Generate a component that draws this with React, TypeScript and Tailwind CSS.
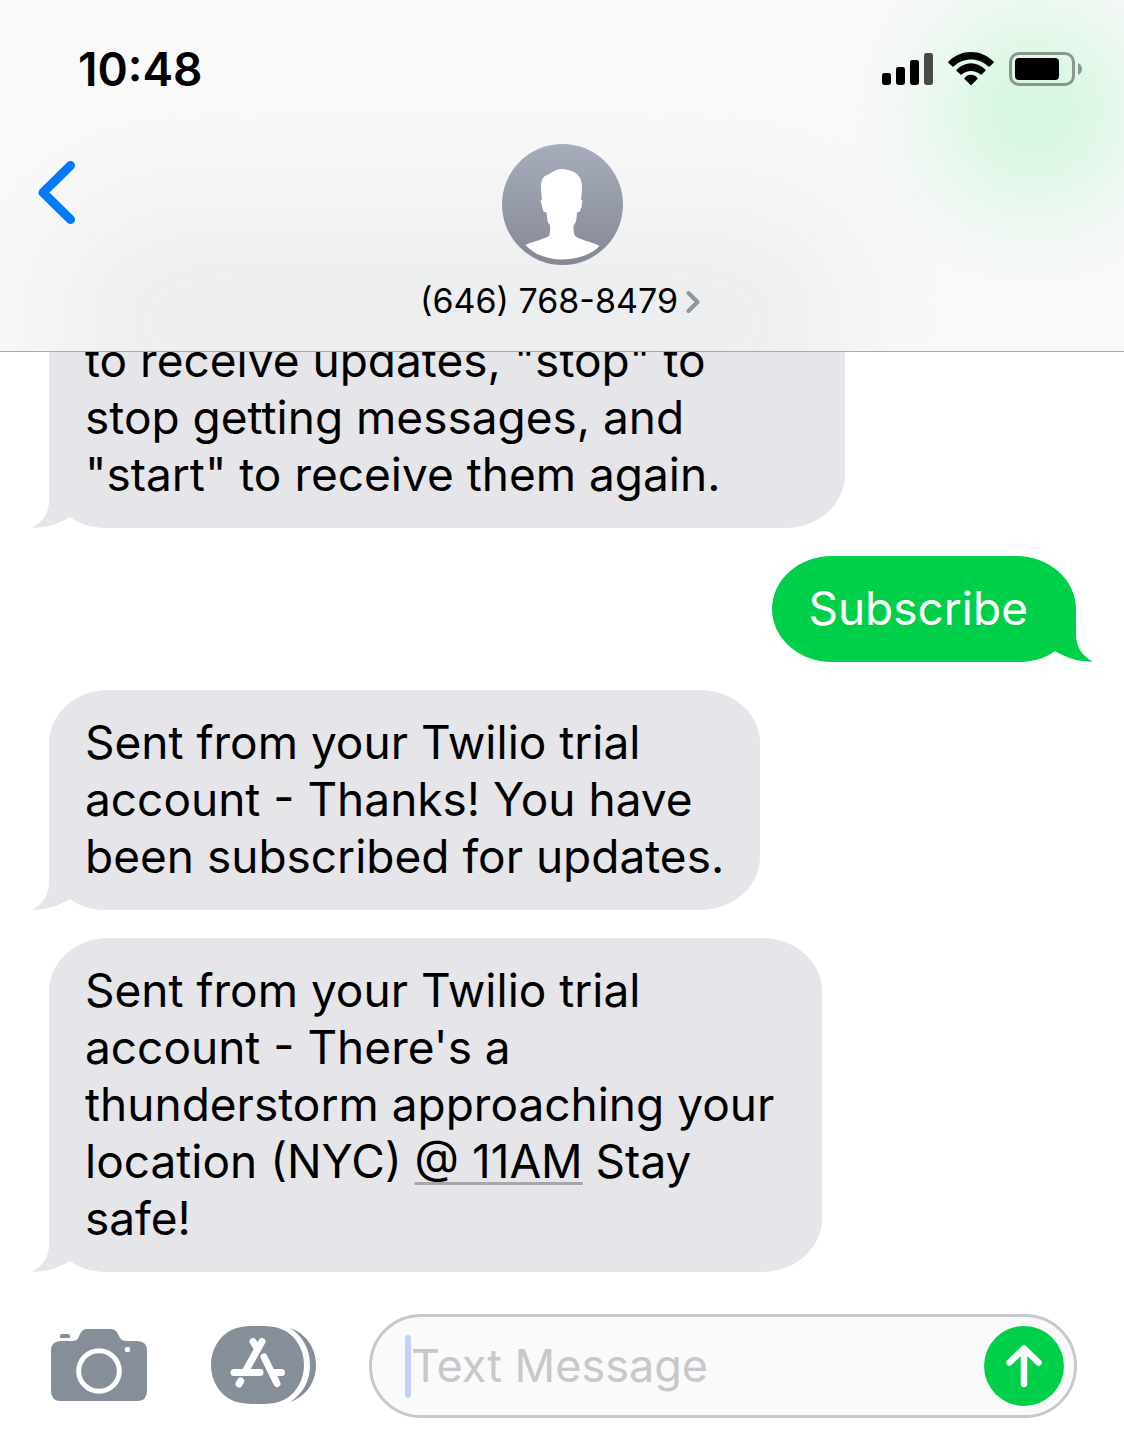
import type { ReactNode } from "react";

function Bubble({ side, className = "", children }: { side: "in" | "out"; className?: string; children: ReactNode }) {
  const incoming = side === "in";
  return (
    <div
      className={`relative max-w-full shrink-0 whitespace-nowrap rounded-[60px/53px] pt-6 pb-[25px] text-[46px] leading-[57px] ${
        incoming ? "self-start bg-[#e5e5ea] px-9 text-black" : "self-end bg-[#00cf49] pr-12 pl-9 text-white"
      } ${className}`}
    >
      <svg
        viewBox="0 0 77 54"
        aria-hidden="true"
        className={`absolute bottom-0 h-[54px] w-[77px] ${
          incoming ? "-left-[17px] text-[#e5e5ea]" : "-right-[17px] -scale-x-100 text-[#00cf49]"
        }`}
      >
        <path fill="currentColor" d="M17 0V26C17 39 11 48 0 53.7C15 53.7 26 50 38 43C48 50 58 54 77 54V0Z" />
      </svg>
      <p className="relative">{children}</p>
    </div>
  );
}

function StatusIcons() {
  return (
    <div className="flex items-center" role="img" aria-label="Signal, Wi-Fi and battery">
      <svg viewBox="0 0 51 32" className="h-8 w-[51px]" aria-hidden="true">
        <rect x="0" y="20" width="9" height="12" rx="2.4" />
        <rect x="14" y="14" width="9" height="18" rx="2.4" />
        <rect x="28" y="7" width="9" height="25" rx="2.4" />
        <rect x="42" y="0" width="9" height="32" rx="2.4" fill="#484a49" />
      </svg>
      <svg viewBox="0 0 46 34" className="ml-[15px] h-[34px] w-[46px]" aria-hidden="true">
        <path d="M0.3 9.8C13-3.2 33-3.2 45.7 9.8Q46 10.3 45.6 10.8L41.6 14.6Q41 15 40.5 14.6C30.5 5.2 15.5 5.2 5.5 14.6Q5 15 4.4 14.6L0.4 10.8Q0 10.3 0.3 9.8Z" />
        <path d="M8.5 17.8C16.5 9 29.5 9 37.5 17.8Q37.9 18.3 37.5 18.8L33.5 22.6Q33 23 32.5 22.6C27 17.7 19 17.7 13.5 22.6Q13 23 12.5 22.6L8.5 18.8Q8.1 18.3 8.5 17.8Z" />
        <path d="M16.5 25.9C20 21.7 26 21.7 29.5 25.9Q29.9 26.4 29.5 26.9L23.6 32.7Q23 33.2 22.4 32.7L16.5 26.9Q16.1 26.4 16.5 25.9Z" />
      </svg>
      <svg viewBox="0 0 74 34" className="ml-[15px] h-[34px] w-[74px]" aria-hidden="true">
        <rect x="1.5" y="1.5" width="63" height="31" rx="8.5" fill="none" stroke="#8a978f" strokeWidth="3" />
        <rect x="6" y="6" width="44" height="22" rx="4" />
        <path d="M69 11Q73 13 73 17T69 23Z" fill="#8a978f" />
      </svg>
    </div>
  );
}

function Avatar() {
  return (
    <svg viewBox="0 0 121 121" className="h-[121px] w-[121px]" aria-hidden="true">
      <defs>
        <linearGradient id="avatar-fill" x1="0" y1="0" x2="0" y2="1">
          <stop offset="0" stopColor="#a6adbc" />
          <stop offset="1" stopColor="#858893" />
        </linearGradient>
      </defs>
      <circle cx="60.5" cy="60.5" r="60.5" fill="url(#avatar-fill)" />
      <path
        fill="#fff"
        d="M60 25C65 25 69 27 73 28.5C78 32 80 37 80 43C80 48 79.5 51 79 55.5Q81 55.5 80 59C80 62 79 64 78.5 66.5Q78 68.5 75 68.5C74.5 73 75 78 71.5 81.5C71.5 86 71.5 88 73 92C77 96 89 97 97.5 102C90 110 76 115.5 60.5 115.5C45 115.5 31 110 23.5 101C32 97 43 95 47 92C48.5 88 48 85 48 81C44.5 78 45.5 73 44.5 68.5Q41.5 68.5 41 66.5C40.5 63 39.5 61 39 58Q38 55.5 40 55.5C39.5 51 39 47 39 43C39 36 41 32 45.5 31C50 28 55 25 60 25Z"
      />
    </svg>
  );
}

function Header() {
  return (
    <header className="relative flex h-[352px] shrink-0 flex-col overflow-hidden border-b border-[#a9abab] bg-[#f9f9f9]">
      <div className="absolute top-[210px] right-[280px] -bottom-20 left-[60px] rounded-[80px] bg-[#ecedee] blur-[60px]" />
      <div className="absolute top-[10px] -right-[10px] h-[200px] w-[200px] rounded-full bg-[#d3f7df] blur-[50px]" />
      <div className="relative flex items-center justify-between pt-10 pr-[41px] pl-[78px]">
        <time className="text-[46px] leading-[58px] font-semibold">10:48</time>
        <StatusIcons />
      </div>
      <div className="relative grid flex-1 grid-cols-[1fr_auto_1fr] items-start pt-[46px]">
        <button type="button" aria-label="Back" className="mt-4 ml-9 w-11">
          <svg viewBox="0 0 44 66" className="h-[66px] w-11" fill="none" aria-hidden="true">
            <path d="M34.5 5.5L7 32.5L34.5 59.5" stroke="#007aff" strokeWidth="9" strokeLinecap="round" strokeLinejoin="round" />
          </svg>
        </button>
        <button type="button" className="flex flex-col items-center">
          <Avatar />
          <span className="mt-4 flex items-center gap-2 pr-1 text-[34px] leading-10">
            (646) 768-8479
            <svg viewBox="0 0 14 24" className="h-6 w-[14px]" fill="none" aria-hidden="true">
              <path d="M2.5 4L11.5 13L2.5 22" stroke="#8e959f" strokeWidth="4" strokeLinecap="round" strokeLinejoin="round" />
            </svg>
          </span>
        </button>
      </div>
    </header>
  );
}

function Composer() {
  return (
    <form className="flex shrink-0 items-center pt-[42px] pr-[47px] pb-3 pl-[51px]" onSubmit={(e) => e.preventDefault()}>
      <button type="button" aria-label="Camera" className="shrink-0 pb-0.5">
        <svg viewBox="0 0 96 72" className="block h-[72px] w-24" fill="#868e99" aria-hidden="true">
          <path d="M9 9V7Q9 5 11 5H17Q19 5 19 7V9Z" />
          <path d="M10 12H21C27 12 27 9 29 5C31 1 33 0 38 0H58C63 0 65 1 67 5C69 9 70 12 76 12H86Q96 12 96 22V62Q96 72 86 72H10Q0 72 0 62V22Q0 12 10 12Z" />
          <circle cx="48" cy="42" r="20.3" fill="none" stroke="#fff" strokeWidth="5" />
          <circle cx="76.5" cy="20.5" r="2.7" fill="#fff" />
        </svg>
      </button>
      <button type="button" aria-label="Apps" className="ml-16 shrink-0 pb-0.5">
        <svg viewBox="0 0 105 78" className="block h-[78px] w-[105px]" aria-hidden="true">
          <path d="M79 2C94 7 105 21 105 39S94 71 79 76C90 69 99 57 99 39S90 9 79 2Z" fill="#868e99" />
          <path d="M47 0C62 0 71 1 80 9C88 16 93 27 93 39S88 62 80 69C71 77 62 78 47 78S22 77 13 69C5 62 0 51 0 39S5 16 13 9C22 1 32 0 47 0Z" fill="#868e99" />
          <g fill="none" stroke="#fff" strokeWidth="7" strokeLinecap="round">
            <path d="M51 15.5L34.5 45" />
            <path d="M42 15.5L46 22" />
            <path d="M23 46.5H49" />
            <path d="M29.7 55L28 58" />
            <path d="M53 31L66 57.5" stroke="#868e99" strokeWidth="9" />
            <path d="M53 31L66 57.5" />
            <path d="M62 46.5H70.5" />
          </g>
        </svg>
      </button>
      <div className="ml-[53px] flex h-[104px] min-w-0 flex-1 items-center rounded-full border-[3px] border-[#c7c7cc] bg-[#fafafa] pr-[10px] pl-[33px]">
        <span className="h-[63px] w-[6px] shrink-0 rounded-full bg-[#c4d0fa]" />
        <input
          type="text"
          aria-label="Text Message"
          placeholder="Text Message"
          className="h-16 min-w-0 flex-1 bg-transparent text-[45px] outline-none placeholder:text-[#c7c7cc] placeholder:opacity-100"
        />
        <button type="submit" aria-label="Send" className="flex size-20 shrink-0 items-center justify-center rounded-full bg-[#00cf49]">
          <svg viewBox="0 0 36 44" className="h-11 w-9" fill="none" stroke="#fff" strokeWidth="6.5" strokeLinecap="round" strokeLinejoin="round" aria-hidden="true">
            <path d="M18 4.5V40M3.5 18.5L18 4.5L32.5 18.5" />
          </svg>
        </button>
      </div>
    </form>
  );
}

export default function App() {
  return (
    <div className="flex h-screen flex-col bg-white font-['Inter',sans-serif] text-black">
      <Header />
      <main className="flex min-h-0 flex-1 flex-col justify-end gap-7 overflow-hidden pr-12 pl-[49px]">
        <Bubble side="in" className="w-[796px] rounded-t-none">
          to receive updates, "stop" to
          <br />
          stop getting messages, and
          <br />
          "start" to receive them again.
        </Bubble>
        <Bubble side="out">Subscribe</Bubble>
        <Bubble side="in">
          Sent from your Twilio trial
          <br />
          account - Thanks! You have
          <br />
          been subscribed for updates.
        </Bubble>
        <Bubble side="in" className="w-[773px]">
          Sent from your Twilio trial
          <br />
          account - There's a
          <br />
          thunderstorm approaching your
          <br />
          location (NYC){" "}
          <a href="#event" className="underline decoration-[#a7a7ab] decoration-[3px] underline-offset-4">
            @ 11AM
          </a>{" "}
          Stay
          <br />
          safe!
        </Bubble>
      </main>
      <Composer />
    </div>
  );
}
